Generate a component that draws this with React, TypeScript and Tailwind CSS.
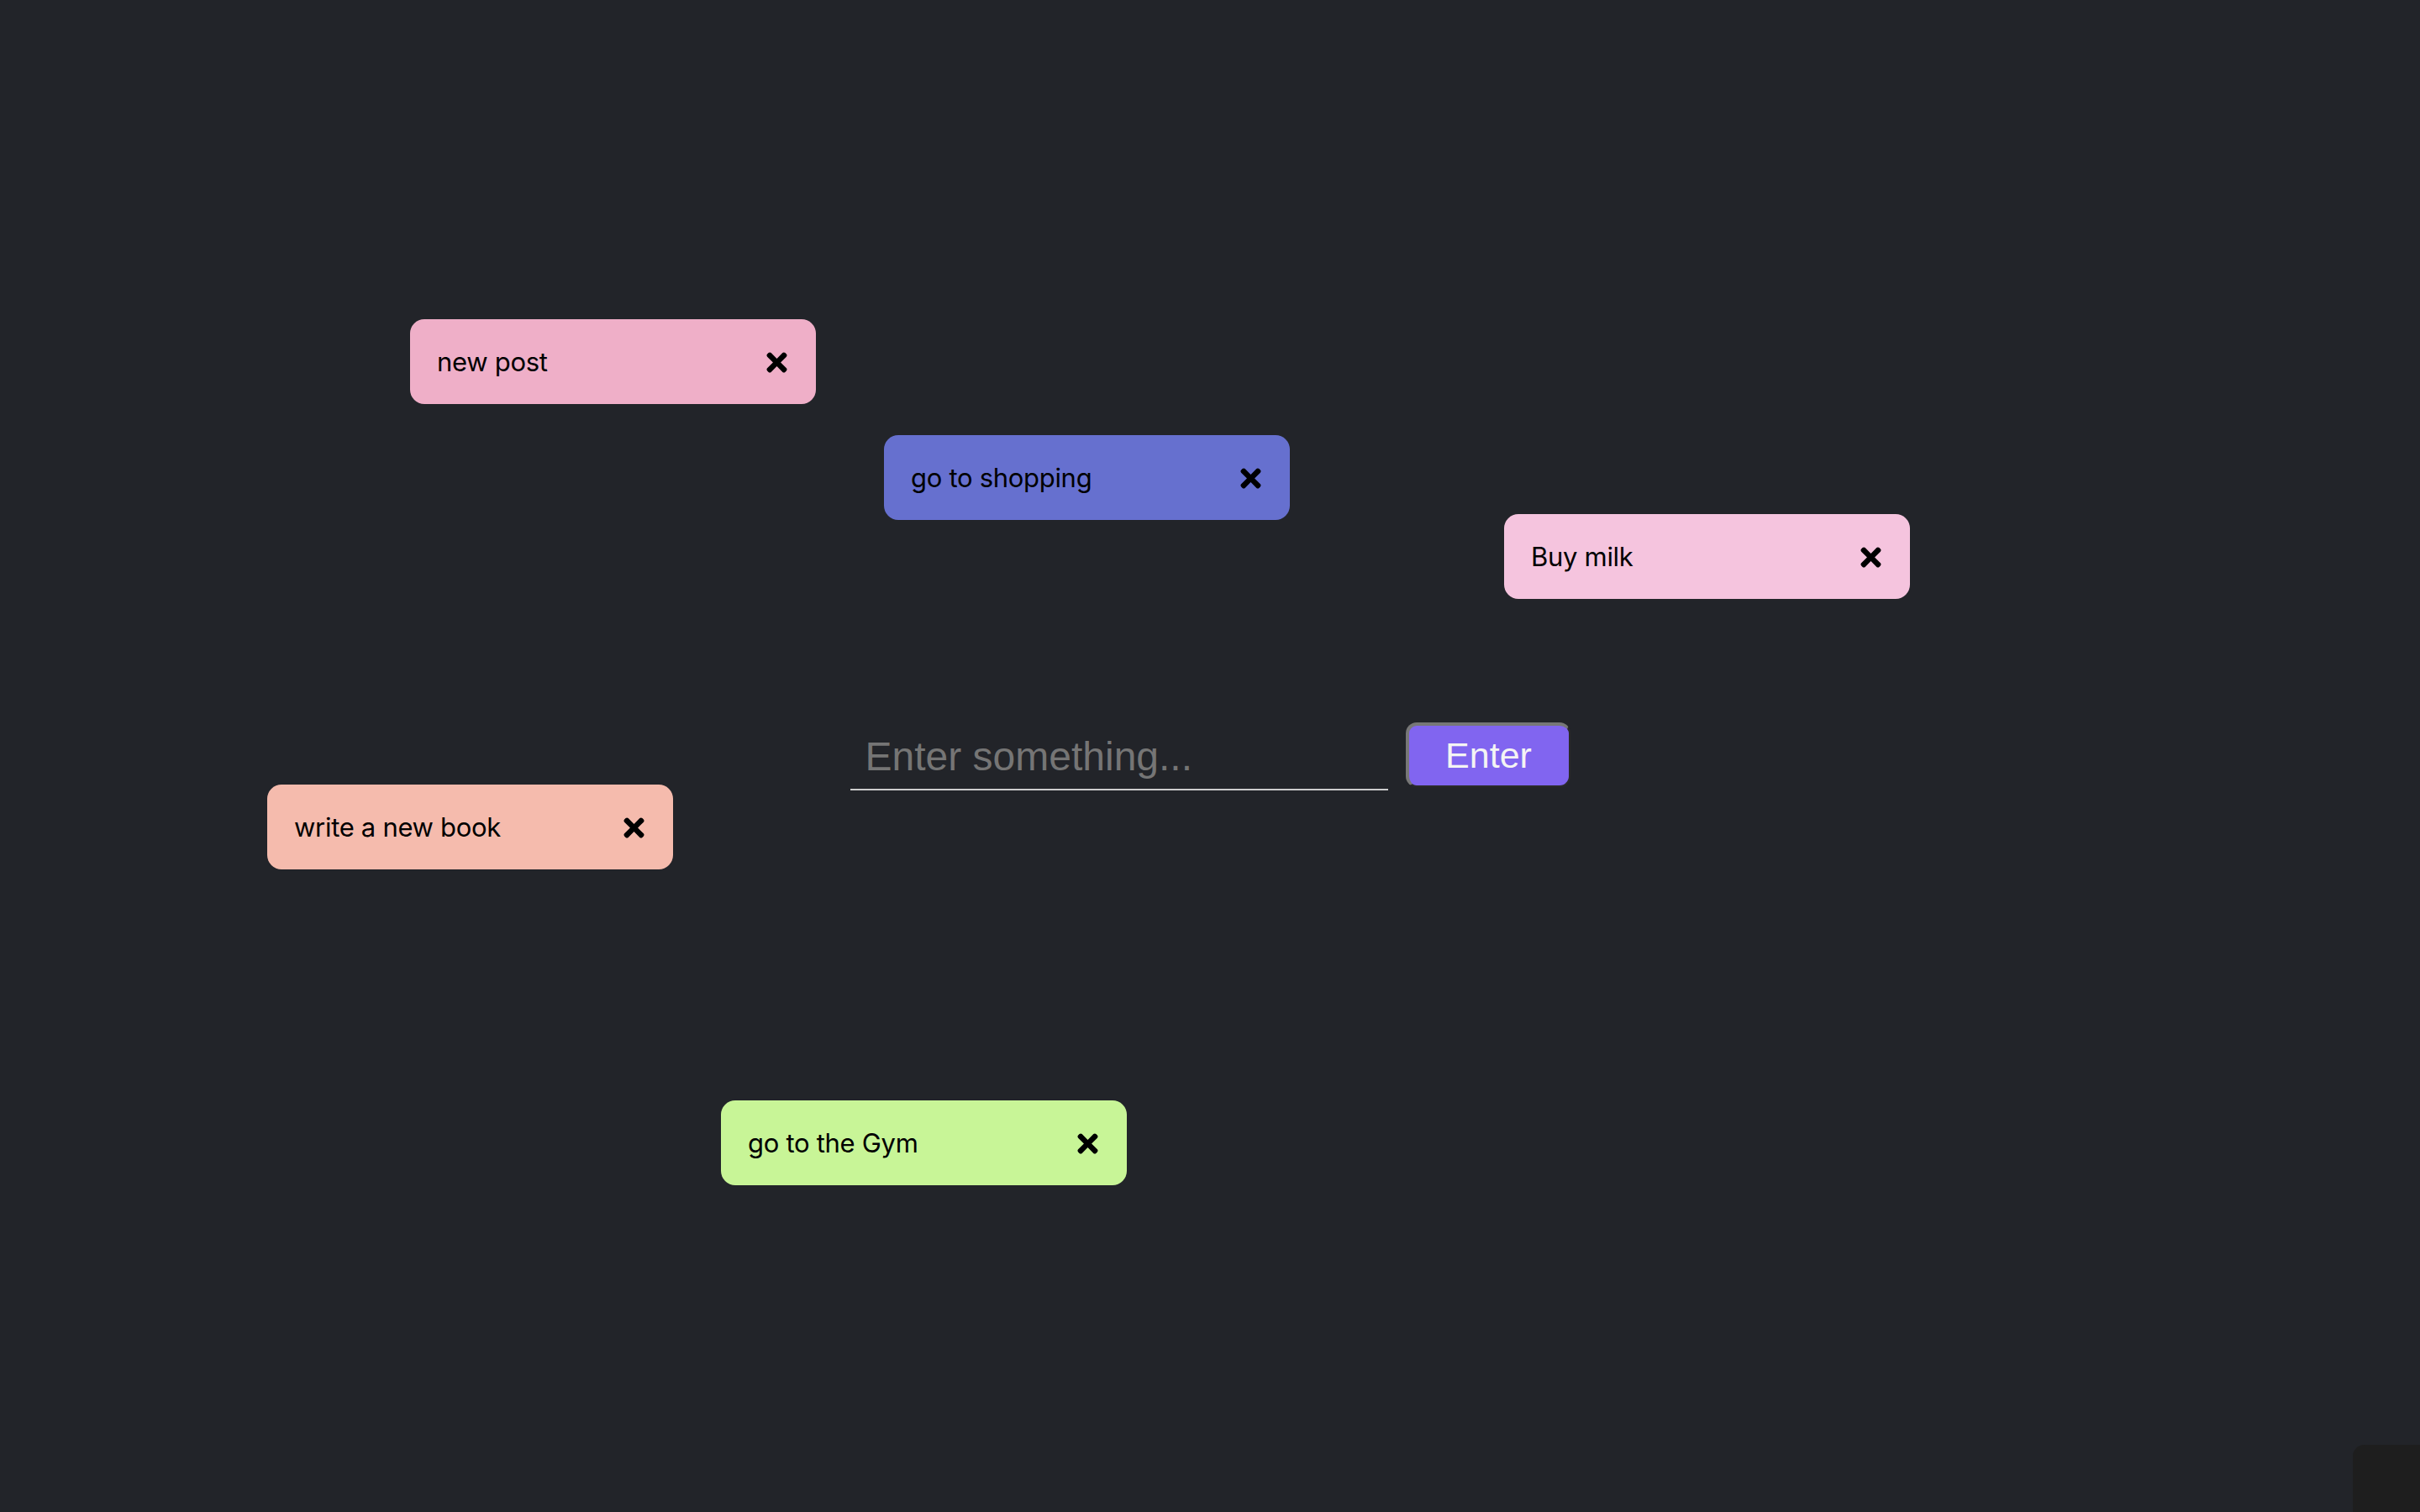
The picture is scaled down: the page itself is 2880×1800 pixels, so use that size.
import {FC} from "react";
import {FaTimes} from "react-icons/fa";

type Note = {
    id: number;
    text: string;
    className: string; // position + colour of the sticky note
};

const notes: Note[] = [
    {id: 1, text: "new post", className: "left-[488px] top-[380px] bg-[#efafc8]"},
    {id: 2, text: "go to shopping", className: "left-[1052px] top-[518px] bg-[#6670cf]"},
    {id: 3, text: "Buy milk", className: "left-[1790px] top-[612px] bg-[#f5c4de]"},
    {id: 4, text: "write a new book", className: "left-[318px] top-[934px] bg-[#f5bbad]"},
    {id: 5, text: "go to the Gym", className: "left-[858px] top-[1310px] bg-[#c8f597]"},
];

const NoteCard: FC<{note: Note}> = ({note}) => {
    return (
        <div
            className={`absolute w-[483px] h-[101px] rounded-[17px] flex items-center justify-between pl-[32px] pr-[29px] text-black ${note.className}`}
            style={{fontFamily: "Inter, 'Noto Sans', sans-serif"}}
        >
            <span className="text-[31px] tracking-[-0.3px] mt-[2px]">{note.text}</span>
            <button className="flex items-center text-black mt-[2px]">
                <FaTimes size={35}/>
            </button>
        </div>
    );
};

const App: FC = () => {
    return (
        <div className="relative w-full h-screen overflow-hidden bg-[#222429] flex items-center justify-center">
            {notes.map((note) => (
                <NoteCard key={note.id} note={note}/>
            ))}

            <form
                className="flex items-center gap-[21px]"
                style={{fontFamily: "'Liberation Sans', Arial, sans-serif"}}
                onSubmit={(e) => e.preventDefault()}
            >
                <input
                    type="text"
                    placeholder="Enter something..."
                    className="w-[640px] bg-transparent border-b-2 border-[#cccccc] pl-[18px] pt-[14px] pb-[11px] text-[48px] leading-[55px] text-white placeholder:text-[#757575] outline-none"
                />
                <button
                    type="submit"
                    className="w-[196px] h-[77px] mb-1 rounded-[13px] bg-[#8165f0] text-[43px] text-[#f4f4f4] border-t-4 border-l-4 border-r-2 border-b-2 border-t-[#777777] border-l-[#777777] border-r-[#2a2a2a] border-b-[#2a2a2a] flex items-center justify-center"
                >
                    Enter
                </button>
            </form>

            {/* dark widget peeking in the bottom right corner */}
            <div className="absolute right-0 bottom-0 w-[80px] h-[80px] rounded-tl-[14px] bg-[#1e1e1e]"/>
        </div>
    );
};

export default App;
